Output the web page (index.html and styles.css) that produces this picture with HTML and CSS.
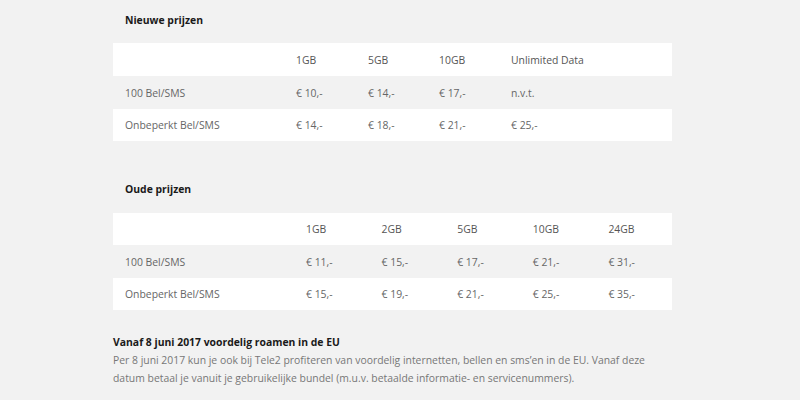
FILE: index.html
```html
<!DOCTYPE html>
<html lang="nl">
<head>
<meta charset="utf-8">
<link rel="stylesheet" href="styles.css">
</head>
<body>
<div class="page">
  <h3 class="title">Nieuwe prijzen</h3>
  <table class="prices new">
    <colgroup><col class="c0"><col class="c1"><col class="c2"><col class="c3"><col class="c4"></colgroup>
    <tr class="head"><td></td><td>1GB</td><td>5GB</td><td>10GB</td><td>Unlimited Data</td></tr>
    <tr class="alt"><td>100 Bel/SMS</td><td>€ 10,-</td><td>€ 14,-</td><td>€ 17,-</td><td>n.v.t.</td></tr>
    <tr><td>Onbeperkt Bel/SMS</td><td>€ 14,-</td><td>€ 18,-</td><td>€ 21,-</td><td>€ 25,-</td></tr>
  </table>

  <h3 class="title second">Oude prijzen</h3>
  <table class="prices old">
    <colgroup><col class="d0"><col class="d1"><col class="d1"><col class="d1"><col class="d1"><col class="d1"></colgroup>
    <tr class="head"><td></td><td>1GB</td><td>2GB</td><td>5GB</td><td>10GB</td><td>24GB</td></tr>
    <tr class="alt"><td>100 Bel/SMS</td><td>€ 11,-</td><td>€ 15,-</td><td>€ 17,-</td><td>€ 21,-</td><td>€ 31,-</td></tr>
    <tr><td>Onbeperkt Bel/SMS</td><td>€ 15,-</td><td>€ 19,-</td><td>€ 21,-</td><td>€ 25,-</td><td>€ 35,-</td></tr>
  </table>

  <div class="roaming">
    <h4>Vanaf 8 juni 2017 voordelig roamen in de EU</h4>
    <p>Per 8 juni 2017 kun je ook bij Tele2 profiteren van voordelig internetten, bellen en sms’en in de EU. Vanaf deze datum betaal je vanuit je gebruikelijke bundel (m.u.v. betaalde informatie- en servicenummers).</p>
  </div>
</div>
</body>
</html>
```
FILE: styles.css
```css
html, body {
  margin: 0;
  padding: 0;
  background: #f2f2f2;
}
body {
  font-family: "Open Sans", "Liberation Sans", sans-serif;
  font-size: 10.4px;
  color: #666;
}
.page {
  width: 559px;
  margin-left: 113px;
  padding-top: 8px;
}
.title {
  margin: 0 0 11px;
  padding-left: 12px;
  font-size: 10.4px;
  line-height: 24px;
  font-weight: 700;
  color: #1a1a1a;
}
.title.second {
  margin-top: 36px;
  margin-bottom: 12px;
}
.prices {
  width: 559px;
  border-collapse: collapse;
  table-layout: fixed;
}
.prices td {
  padding: 0 0 0 12px;
  height: 33px;
  vertical-align: middle;
  white-space: nowrap;
  background: #f2f2f2;
}
.prices tr.head td {
  background: #fff;
  color: #555;
}
.prices tr:last-child td {
  background: #fff;
  height: 32px;
}
.old td { height: 32px; }
.old tr.alt td { height: 33px; }
.c0 { width: 171px; }
.c1 { width: 72px; }
.c2 { width: 71px; }
.c3 { width: 72px; }
.c4 { width: 173px; }
.d0 { width: 181px; }
.d1 { width: 75.6px; }
.roaming {
  margin-top: 23px;
}
.roaming h4 {
  margin: 0;
  font-size: 10.4px;
  line-height: 18px;
  font-weight: 700;
  color: #1a1a1a;
}
.roaming p {
  margin: 0;
  line-height: 18px;
  color: #777;
}
```
